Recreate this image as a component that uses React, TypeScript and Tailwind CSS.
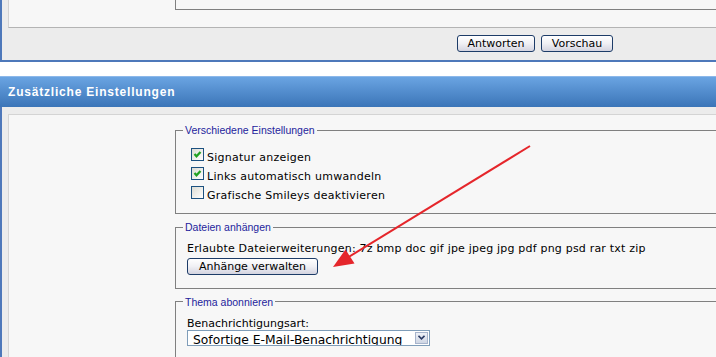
import React from 'react';

function XpButton({ label, width }: { label: string; width: string }) {
  return (
    <button
      className={`${width} h-[17px] rounded-[3px] border border-[#1d3c68] bg-gradient-to-b from-white via-[#f0f0f4] to-[#d4d4e0] text-[11px] leading-[15px] text-black text-center`}
    >
      {label}
    </button>
  );
}

function Checkbox({ checked, label }: { checked: boolean; label: string }) {
  return (
    <div className="flex h-[19px] pl-[4px]">
      <span className="mt-[3px] w-[13px] h-[13px] border border-[#1c5180] bg-gradient-to-br from-[#dcdcd4] to-white flex items-center justify-center">
        {checked && (
          <svg width="11" height="11" viewBox="0 0 11 11">
            <polyline points="2.5,5 4.5,7.3 8.5,3" fill="none" stroke="#21a121" strokeWidth="2.2" />
          </svg>
        )}
      </span>
      <span className="ml-[3px] mt-[6px] leading-[13px] tracking-[0.25px]">{label}</span>
    </div>
  );
}

function Legend({ children }: { children: React.ReactNode }) {
  return (
    <legend className="ml-[-4px] px-[2px] text-[10.5px] leading-[14px] text-[#24249c] font-['Liberation_Sans',Arial,sans-serif]">
      {children}
    </legend>
  );
}

export default function App() {
  return (
    <div className="relative w-[716px] h-[357px] overflow-hidden bg-white text-[11px] text-black font-['DejaVu_Sans',Verdana,sans-serif]">
      <div className="w-[900px]">
        {/* Previous panel (bottom part) */}
        <div className="bg-[#ececec] border-l-2 border-b-2 border-[#4e78ba] pl-[6px]">
          <div className="h-[28px] bg-[#f7f7f7] border-l border-b border-l-[#d2d2d2] border-b-[#b4b4b4]">
            <div className="ml-[166px] h-[10px] border-l border-b border-[#808080]" />
          </div>
          <div className="h-[32px] pt-[7px] pl-[449px] flex gap-[6px]">
            <XpButton label="Antworten" width="w-[78px]" />
            <XpButton label="Vorschau" width="w-[72px]" />
          </div>
        </div>

        {/* Header */}
        <div className="mt-[14px] h-[31px] border-t border-[#8cb8ea] bg-gradient-to-b from-[#6aa4e2] to-[#3b75b8] flex items-center pl-[8px]">
          <span className="text-white font-bold text-[12px] tracking-[0.8px] font-['Liberation_Sans',Arial,sans-serif]">
            Zusätzliche Einstellungen
          </span>
        </div>

        {/* Settings panel */}
        <div className="bg-[#ececec] border-l-2 border-[#4e78ba] pl-[6px] pt-[7px] h-[260px]">
          <div className="h-full bg-[#f7f7f7] border-t border-l border-[#d4d4d4] pl-[166px] pt-[8px]">
            <fieldset className="border border-r-0 border-[#808080] pl-[11px] pt-[8px] pb-[11px]">
              <Legend>Verschiedene Einstellungen</Legend>
              <Checkbox checked label="Signatur anzeigen" />
              <Checkbox checked label="Links automatisch umwandeln" />
              <Checkbox checked={false} label="Grafische Smileys deaktivieren" />
            </fieldset>

            <fieldset className="mt-[6px] border border-r-0 border-[#808080] pl-[11px] pt-[8px] pb-[12px]">
              <Legend>Dateien anhängen</Legend>
              <div className="leading-[13px] tracking-[0.2px]">
                Erlaubte Dateierweiterungen: 7z bmp doc gif jpe jpeg jpg pdf png psd rar txt zip
              </div>
              <div className="mt-[3px]">
                <XpButton label="Anhänge verwalten" width="w-[131px]" />
              </div>
            </fieldset>

            <fieldset className="mt-[6px] border border-r-0 border-[#808080] pl-[11px] pt-[8px] pb-[12px]">
              <Legend>Thema abonnieren</Legend>
              <div className="leading-[13px]">Benachrichtigungsart:</div>
              <div className="w-[243px] h-[16px] border border-[#7f9db9] bg-white flex">
                <div className="flex-1 overflow-hidden pl-[5px] pt-[2px] text-[12.3px] leading-[14px] whitespace-nowrap">
                  Sofortige E-Mail-Benachrichtigung
                </div>
                <div className="my-[1px] mr-[1px] w-[13px] h-[12px] border border-[#a7b4cc] bg-gradient-to-b from-[#eef1f7] to-[#cfd6e4] flex items-center justify-center">
                  <svg width="7" height="5" viewBox="0 0 7 5">
                    <polyline points="0.5,0.8 3.5,3.8 6.5,0.8" fill="none" stroke="#2b3c66" strokeWidth="1.6" />
                  </svg>
                </div>
              </div>
            </fieldset>
          </div>
        </div>
      </div>

      {/* Red annotation arrow */}
      <svg className="absolute inset-0 pointer-events-none" width="716" height="357" viewBox="0 0 716 357">
        <line x1="530" y1="146" x2="347" y2="258" stroke="#e5262b" strokeWidth="2" />
        <polygon points="333,267 345.5,249.5 354.5,263.5" fill="#e5262b" />
      </svg>
    </div>
  );
}
